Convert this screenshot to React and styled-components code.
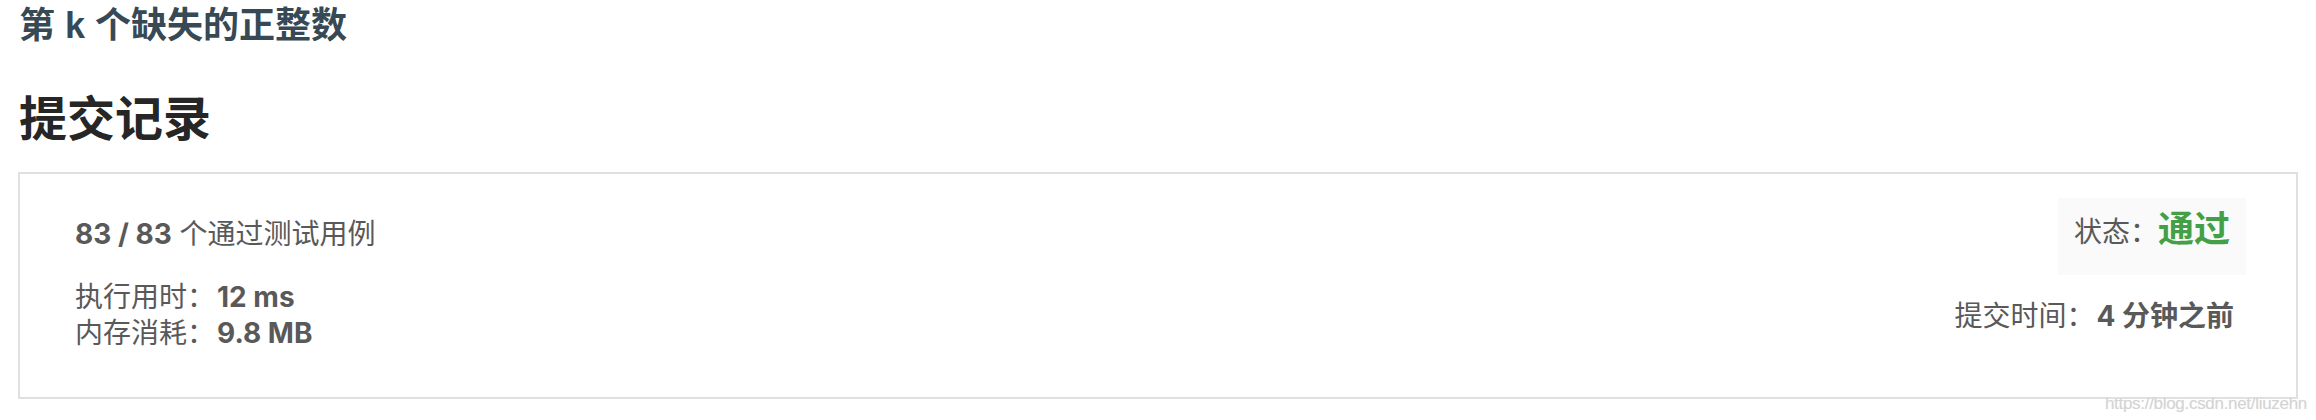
import React from "react";
import styled, { createGlobalStyle } from "styled-components";

const Global = createGlobalStyle`
  html, body { margin: 0; padding: 0; background: #ffffff; }
  body { font-family: "Liberation Sans", "Noto Sans CJK SC", sans-serif; }
`;

const Page = styled.div`
  position: relative;
  width: 2316px;
  height: 420px;
  padding: 8px 18px 0 18px;
  box-sizing: border-box;
  overflow: hidden;
`;

const ProblemTitle = styled.h3`
  margin: 0 0 0 1px;
  font-size: 36px;
  line-height: 36px;
  font-weight: 600;
  color: #364954;
`;

const SectionTitle = styled.h2`
  margin: 52px 0 0 1px;
  font-size: 48px;
  line-height: 48px;
  font-weight: 700;
  color: #262626;
`;

const Card = styled.div`
  margin-top: 28px;
  height: 227px;
  box-sizing: border-box;
  border: 2px solid #e0e0e0;
  padding: 24px 50px 0 55px;
  display: flex;
  justify-content: space-between;
  align-items: flex-start;
`;

const LeftCol = styled.div`
  margin-top: 22px;
  display: flex;
  flex-direction: column;
`;

const Line = styled.div`
  font-size: 28px;
  line-height: 28px;
  color: #595959;
  margin-top: ${(p) => p.$gap || 0}px;
  white-space: nowrap;
`;

const Strong = styled.b`
  font-family: Inter, "Noto Sans CJK SC", sans-serif;
  font-weight: 700;
  margin-left: ${(p) => p.$space || 0}px;
`;

const RightCol = styled.div`
  display: flex;
  flex-direction: column;
  align-items: flex-end;
`;

const StatusBox = styled.div`
  background: #fafafa;
  padding: 14px 16px 24px 16px;
  display: flex;
  align-items: baseline;
  line-height: 36px;
  font-size: 28px;
  color: #595959;
`;

const StatusValue = styled.span`
  font-size: 36px;
  font-weight: 700;
  color: #43a047;
`;

const TimeLine = styled(Line)`
  padding-right: 12px;
`;

const Watermark = styled.div`
  position: absolute;
  right: 9px;
  bottom: 6px;
  font-family: "Liberation Sans", sans-serif;
  font-size: 17px;
  color: #d4d4d4;
  letter-spacing: -0.3px;
  text-shadow: 0 0 1px #eeeeee;
`;

export default function App() {
  return (
    <>
      <Global />
      <Page>
        <ProblemTitle>第 k 个缺失的正整数</ProblemTitle>
        <SectionTitle>提交记录</SectionTitle>
        <Card>
          <LeftCol>
            <Line>
              <Strong>83 / 83</Strong> 个通过测试用例
            </Line>
            <Line $gap={34}>
              执行用时：<Strong $space={2}>12 ms</Strong>
            </Line>
            <Line $gap={7}>
              内存消耗：<Strong $space={2}>9.8 MB</Strong>
            </Line>
          </LeftCol>
          <RightCol>
            <StatusBox>
              状态：<StatusValue>通过</StatusValue>
            </StatusBox>
            <TimeLine $gap={27}>
              提交时间：<Strong $space={2}>4 分钟之前</Strong>
            </TimeLine>
          </RightCol>
        </Card>
        <Watermark>https://blog.csdn.net/liuzehn</Watermark>
      </Page>
    </>
  );
}
